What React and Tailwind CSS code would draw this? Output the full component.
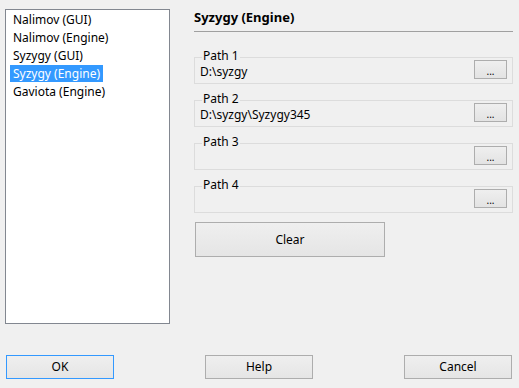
import { useState } from 'react';

const tables = ['Nalimov (GUI)', 'Nalimov (Engine)', 'Syzygy (GUI)', 'Syzygy (Engine)', 'Gaviota (Engine)'];

const paths = [
  { label: 'Path 1', value: 'D:\\syzgy' },
  { label: 'Path 2', value: 'D:\\syzgy\\Syzygy345' },
  { label: 'Path 3', value: '' },
  { label: 'Path 4', value: '' },
];

function PathBox({ label, value }) {
  return (
    <div className="relative h-[27px] border border-[#dcdcdc]">
      <span className="absolute left-[7px] -top-[8px] bg-[#f0f0f0] px-[1px] leading-[12px]">{label}</span>
      <div className="flex h-full items-start justify-between pl-[5px] pr-[5px]">
        <span className="mt-[6px] leading-[16px]">{value}</span>
        <button className="mt-[2px] flex h-[19px] w-[33px] items-end justify-center border border-[#adadad] bg-gradient-to-b from-[#efefef] to-[#e3e3e3] pb-[2px] text-[10px] leading-[10px]">
          ...
        </button>
      </div>
    </div>
  );
}

function DlgButton({ children, focused }) {
  return (
    <button
      className={`h-[24px] w-[108px] border bg-gradient-to-b from-[#efefef] to-[#e5e5e5] leading-[16px] ${
        focused ? 'border-[#3399ff]' : 'border-[#adadad]'
      }`}
    >
      {children}
    </button>
  );
}

export default function App() {
  const [sel, setSel] = useState(3);

  return (
    <div
      className="flex h-[388px] w-[519px] flex-col bg-[#f0f0f0] text-[12px] text-black"
      style={{ fontFamily: '"Noto Sans", "Open Sans", sans-serif' }}
    >
      <div className="flex pl-[5px] pt-[9px]">
        <div className="h-[315px] w-[165px] border border-[#828790] bg-white pt-[1px]">
          {tables.map((t, i) => (
            <div key={t} className="h-[18px]">
              <span
                onClick={() => setSel(i)}
                className={`ml-[4px] inline-block h-[17px] px-[3px] leading-[17px] ${
                  sel === i ? 'bg-[#3399ff] text-white' : ''
                }`}
              >
                {t}
              </span>
            </div>
          ))}
        </div>

        <div className="ml-[24px] w-[319px]">
          <div className="h-[23px] border-b border-[#a0a0a0] text-[13px] font-bold leading-[16px]">Syzygy (Engine)</div>
          <div className="mt-[25px] flex flex-col gap-[16px]">
            {paths.map((p) => (
              <PathBox key={p.label} {...p} />
            ))}
          </div>
          <button className="ml-[1px] mt-[9px] h-[35px] w-[190px] border border-[#adadad] bg-gradient-to-b from-[#efefef] to-[#e5e5e5] leading-[16px]">
            Clear
          </button>
        </div>
      </div>

      <div className="mt-[31px] flex w-[512px] justify-between pl-[6px]">
        <DlgButton focused>OK</DlgButton>
        <DlgButton>Help</DlgButton>
        <DlgButton>Cancel</DlgButton>
      </div>
    </div>
  );
}
